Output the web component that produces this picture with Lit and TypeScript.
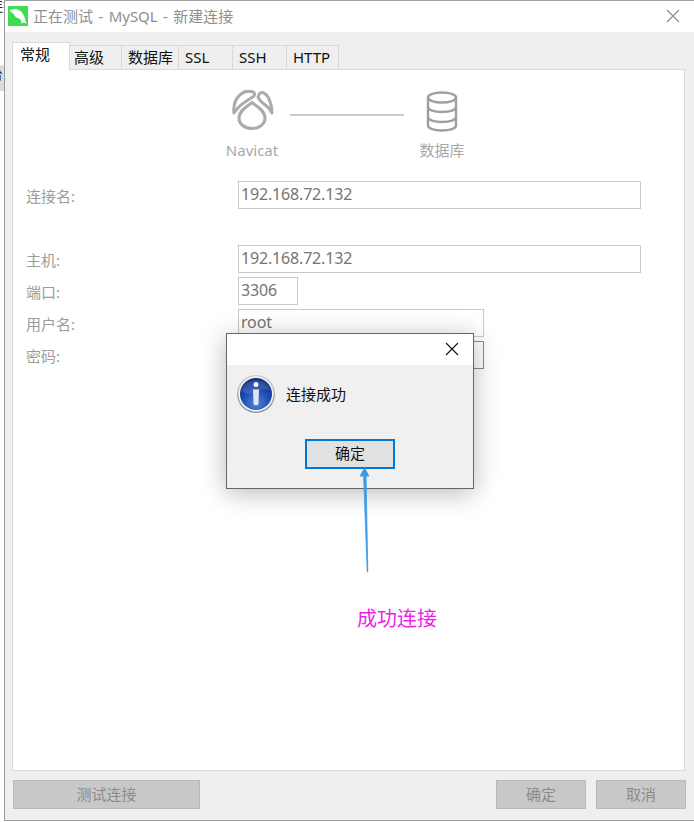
import { LitElement, html, css, svg } from "lit";
import { customElement } from "lit/decorators.js";

@customElement("app-root")
export class AppRoot extends LitElement {
  static styles = css`
    :host { display: block; width: 694px; height: 822px; position: relative; overflow: hidden; background: #fff;
      font-family: "Noto Sans", "Noto Sans CJK SC", sans-serif; font-size: 15px; }
    .bits { position: absolute; left: 0; width: 4px; overflow: hidden; color: #222; font-size: 14px; line-height: 16px; white-space: nowrap; }
    .bits span { display: block; margin-left: -11px; }
    .b0 { top: -2px; height: 15px; }
    .b1 { top: 65px; height: 26px; background: #dcdcdc; border-top: 1px solid #ececec; box-sizing: border-box; }
    .win { position: absolute; left: 4px; top: 0; width: 690px; height: 821px; box-sizing: border-box;
      border-left: 1px solid #9a9a9a; border-top: 1px solid #a0a0a0; border-bottom: 1px solid #a0a0a0;
      background: #efefef; display: flex; flex-direction: column; }
    .title { height: 31px; flex: none; background: #fff; display: flex; align-items: center; position: relative; }
    .logo { width: 20px; height: 20px; margin-left: 3px; margin-top: -1px; display: block; }
    .ttext { margin-left: 5px; margin-top: -1px; font-size: 15px; word-spacing: 1.5px; color: #8f8f8f; line-height: 20px; }
    .x { position: absolute; right: 14px; top: 8px; width: 14px; height: 14px; display: block; }
    .tabs { display: flex; align-items: flex-end; height: 38px; flex: none; padding-left: 7px; margin-bottom: -1px; position: relative; z-index: 1; }
    .tab { box-sizing: border-box; height: 25px; border: 1px solid #d9d9d9; border-left: none;
      background: #efefef; color: #111; display: flex; align-items: center; line-height: 22px; padding: 0 0 2px 6px; }
    .tab.on { width: 58px; height: 28px; background: #fff; border-left: 1px solid #d9d9d9; border-bottom: none; padding: 0 0 5px 7px; }
    .t2 { width: 52px; padding-left: 4px; }
    .t3 { width: 57px; padding-left: 6px; }
    .t4, .t5 { width: 54px; }
    .t6 { width: 52px; }
    .pane { box-sizing: border-box; width: 673px; height: 702px; margin-left: 7px; flex: none; background: #fff; border: 1px solid #d9d9d9; padding-top: 20px; }
    .conn { display: flex; align-items: flex-start; margin-left: 199px; }
    .node { width: 80px; flex: none; display: flex; flex-direction: column; align-items: center; color: #a8a8a8; line-height: 20px; }
    .node svg { display: block; width: 44px; height: 44px; margin-bottom: 6px; }
    .wire { width: 114px; height: 2px; background: #cbcbcb; margin: 24px -2px 0 -2px; flex: none; }
    .form { margin-top: 21px; padding-left: 13px; display: grid; grid-template-columns: 212px 1fr; row-gap: 4px; align-items: center; color: #9c9c9c; }
    .lab { box-sizing: border-box; height: 28px; line-height: 26px; padding-top: 2px; }
    .inp { box-sizing: border-box; height: 28px; border: 1px solid #c9c9c9; background: #fff; color: #757575; font-size: 16px; letter-spacing: -.17px; line-height: 24px; padding-left: 2px; }
    .w1 { width: 403px; } .w2 { width: 60px; } .w3 { width: 246px; }
    .w3.pw { border-color: #8a8a8a; }
    .gap { grid-column: 1 / 3; height: 28px; }
    .foot { display: flex; padding: 9px 8px 0 8px; gap: 10px; }
    .btn { box-sizing: border-box; height: 29px; width: 90px; background: #c8c8c8; border: 1px solid #bababa; color: #8b8b8b;
      display: flex; align-items: center; justify-content: center; line-height: 20px; padding-bottom: 2px; }
    .btn.wide { width: 187px; margin-right: auto; }
    .dlg { position: absolute; left: 226px; top: 333px; width: 248px; height: 156px; box-sizing: border-box; border: 1px solid #666;
      background: #f0f0f0; box-shadow: 0 4px 24px rgba(0,0,0,.28); display: flex; flex-direction: column; z-index: 3; }
    .dt { height: 31px; background: #fff; position: relative; flex: none; }
    .dx { position: absolute; right: 14px; top: 8px; width: 14px; height: 14px; display: block; }
    .dm { display: flex; align-items: center; padding: 9px 0 0 9px; height: 40px; color: #111; }
    .dm svg { width: 40px; height: 40px; display: block; margin-right: 10px; }
    .dm span { margin-top: -2px; }
    .ok { box-sizing: border-box; width: 90px; height: 30px; margin: 25px 0 0 78px; border: 2px solid #0078d7; background: #e1e1e1; color: #111;
      display: flex; align-items: center; justify-content: center; line-height: 20px; padding-bottom: 2px; }
    .arrow { position: absolute; left: 350px; top: 460px; width: 30px; height: 120px; z-index: 4; }
    .note { position: absolute; left: 357px; top: 605px; font-size: 20px; line-height: 28px; color: #f01ee8; z-index: 4; }
  `;

  render() {
    const cross = svg`<path d="M1 1 13 13M13 1 1 13" fill="none" stroke-width="1.1"/>`;
    return html`
      <div class="bits b0"><span>连接</span></div>
      <div class="bits b1"><span>台</span></div>
      <div class="win">
        <div class="title">
          <svg class="logo" viewBox="0 0 20 20">
            <rect width="20" height="20" fill="#3fdc52"/>
            <path d="M1.500 4.500C3 3.500 5 3 6.500 3 9 2.500 12 4 14 6.500c2 2.500 3 5.500 3.500 8.500l1 2.500-3-1-2.500 1 .5-2.500c-1-1.500-2-2.500-3.500-3-2.500-.5-3.500-2-4-4C5 7.500 3 6 1.500 4.500Z" fill="#fff"/>
          </svg>
          <span class="ttext">正在测试 - MySQL - 新建连接</span>
          <svg class="x" viewBox="0 0 14 14" stroke="#8a8a8a">${cross}</svg>
        </div>
        <div class="tabs">
          <div class="tab on">常规</div>
          <div class="tab t2">高级</div>
          <div class="tab t3">数据库</div>
          <div class="tab t4">SSL</div>
          <div class="tab t5">SSH</div>
          <div class="tab t6">HTTP</div>
        </div>
        <div class="pane">
          <div class="conn">
            <div class="node">
              <svg viewBox="0 0 44 44" fill="none" stroke="#ababab" stroke-width="3" stroke-linejoin="round">
                <path d="M4 23C3 15 6 8 11 4c3-2.500 8-3.500 12-2 1.500.5 2 2.500 1 4-4 3-12 7-16 12-2 2-3 3.500-4 5Z"/>
                <path d="M28 7c.5-2.500 2-4.500 4.500-4.500C38 4 42 13 42 23c-2-4.500-4.500-6.500-8-9-2.500-2-5-4-6-7Z"/>
                <path d="M22 12.500C18 16 9 20 9 28c0 6 5.500 10.500 13 10.500S35 34 35 28c0-8-9-12-13-15.500Z"/>
              </svg>
              <span>Navicat</span>
            </div>
            <div class="wire"></div>
            <div class="node">
              <svg viewBox="0 0 44 44" fill="none" stroke="#9f9f9f" stroke-width="2.400">
                <ellipse cx="22" cy="7.500" rx="14" ry="5"/>
                <path d="M8 7.500v28c0 3 6 5 14 5s14-2 14-5v-28"/>
                <path d="M8 17c0 3 6 5 14 5s14-2 14-5"/>
                <path d="M8 27c0 3 6 5 14 5s14-2 14-5"/>
              </svg>
              <span>数据库</span>
            </div>
          </div>
          <div class="form">
            <div class="lab">连接名:</div><div class="inp w1">192.168.72.132</div>
            <div class="gap"></div>
            <div class="lab">主机:</div><div class="inp w1">192.168.72.132</div>
            <div class="lab">端口:</div><div class="inp w2">3306</div>
            <div class="lab">用户名:</div><div class="inp w3">root</div>
            <div class="lab">密码:</div><div class="inp w3 pw"></div>
          </div>
        </div>
        <div class="foot">
          <div class="btn wide">测试连接</div>
          <div class="btn">确定</div>
          <div class="btn">取消</div>
        </div>
      </div>

      <div class="dlg">
        <div class="dt"><svg class="dx" viewBox="0 0 14 14" stroke="#111">${cross}</svg></div>
        <div class="dm">
          <svg viewBox="0 0 40 40">
            <defs>
              <radialGradient id="g" cx="50%" cy="80%" r="75%">
                <stop offset="0" stop-color="#4c86dc"/><stop offset=".55" stop-color="#1f4fb6"/><stop offset="1" stop-color="#102a80"/>
              </radialGradient>
              <linearGradient id="r" x1="0" y1="0" x2="0" y2="1">
                <stop offset="0" stop-color="#cfcfcf"/><stop offset="1" stop-color="#888"/>
              </linearGradient>
            </defs>
            <circle cx="20" cy="20" r="19" fill="url(#r)"/>
            <circle cx="20" cy="20" r="17.700" fill="#f2f2f2"/>
            <circle cx="20" cy="20" r="16" fill="url(#g)"/>
            <path d="M5 17C8 9 14 6 20 6s12 3 15 11c-5-3-10-2-15 1-5 3-10 2-15-1Z" fill="#fff" opacity=".12"/>
            <circle cx="20" cy="10.500" r="2.500" fill="#f4f6fb"/>
            <path d="M17 15.500h6l-.6 15c-1.200 1-3.600 1-4.800 0Z" fill="#e2e6ee"/>
          </svg>
          <span>连接成功</span>
        </div>
        <div class="ok">确定</div>
      </div>

      <svg class="arrow" viewBox="0 0 30 120">
        <path d="M13.500 12.500 16 12.500 17.800 112 17.200 112Z" fill="#3a9be8" stroke="#3a9be8" stroke-width=".8"/>
        <path d="M14.500 7 19.500 16.500 9.500 16.500Z" fill="#3a9be8"/>
      </svg>
      <div class="note">成功连接</div>
    `;
  }
}
